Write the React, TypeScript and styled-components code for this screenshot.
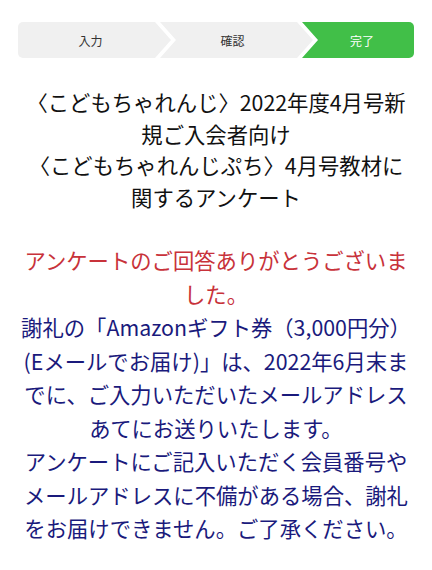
import React from 'react';
import styled, { createGlobalStyle } from 'styled-components';

const GlobalStyle = createGlobalStyle`
  html, body {
    margin: 0;
    padding: 0;
    background: #ffffff;
  }

  body {
    font-family: "Noto Sans CJK JP", "Noto Sans", sans-serif;
    -webkit-font-smoothing: antialiased;
  }
`;

const steps = ['入力', '確認', '完了'];
const currentStep = 2;

const App = (): JSX.Element => {
  return (
    <>
      <GlobalStyle />
      <Page>
        <Stepper>
          {steps.map((label, i) => (
            <Step
              key={label}
              $first={i === 0}
              $last={i === steps.length - 1}
              $active={i === currentStep}
            >
              {label}
            </Step>
          ))}
        </Stepper>

        <Title>
          〈こどもちゃれんじ〉2022年度4月号新
          <br />
          規ご入会者向け
          <br />
          〈こどもちゃれんじぷち〉4月号教材に
          <br />
          関するアンケート
        </Title>

        <Message>
          <Thanks>
            アンケートのご回答ありがとうございま
            <br />
            した。
          </Thanks>
          <Notice>
            謝礼の「Amazonギフト券（3,000円分）
            <br />
            (Eメールでお届け)」は、2022年6月末ま
            <br />
            でに、ご入力いただいたメールアドレス
            <br />
            あてにお送りいたします。
            <br />
            アンケートにご記入いただく会員番号や
            <br />
            メールアドレスに不備がある場合、謝礼
            <br />
            をお届けできません。ご了承ください。
          </Notice>
        </Message>
      </Page>
    </>
  );
};

interface StepProps {
  $first: boolean;
  $last: boolean;
  $active: boolean;
}

const Page = styled.main`
  display: flex;
  flex-direction: column;
  padding: 22px 18px 0;
`;

const Stepper = styled.ol`
  display: flex;
  margin: 0;
  padding: 0;
  list-style: none;
  height: 36px;
`;

const Step = styled.li<StepProps>`
  display: flex;
  align-items: center;
  justify-content: center;
  flex: ${({ $last }) => ($last ? '1 1 auto' : '0 0 145px')};
  margin-left: ${({ $first }) => ($first ? '0' : '-11px')};
  padding: ${({ $last }) => ($last ? '0 0 0 8px' : '0 8px 0 0')};
  font-size: 12px;
  color: ${({ $active }) => ($active ? '#ffffff' : '#333333')};
  background: ${({ $active }) => ($active ? '#41bf48' : '#f0f0f0')};
  border-radius: ${({ $first, $last }) =>
    $first ? '5px 0 0 5px' : $last ? '0 5px 5px 0' : '0'};
  clip-path: ${({ $first, $last }) =>
    $first
      ? 'polygon(0 0, calc(100% - 16px) 0, 100% 50%, calc(100% - 16px) 100%, 0 100%)'
      : $last
        ? 'polygon(0 0, 100% 0, 100% 100%, 0 100%, 16px 50%)'
        : 'polygon(0 0, calc(100% - 16px) 0, 100% 50%, calc(100% - 16px) 100%, 0 100%, 16px 50%)'};
`;

const Title = styled.h1`
  margin: 28px 0 0;
  font-size: 21.33px;
  font-weight: 400;
  line-height: 31.5px;
  color: #111111;
  text-align: center;
  white-space: nowrap;
`;

const Message = styled.section`
  display: flex;
  flex-direction: column;
  margin-top: 31px;
  font-size: 21.33px;
  line-height: 33.5px;
  text-align: center;
  white-space: nowrap;
`;

const Thanks = styled.p`
  margin: 0;
  color: #c8323a;
`;

const Notice = styled.p`
  margin: 0;
  color: #1a1a7c;
`;

export default App;
